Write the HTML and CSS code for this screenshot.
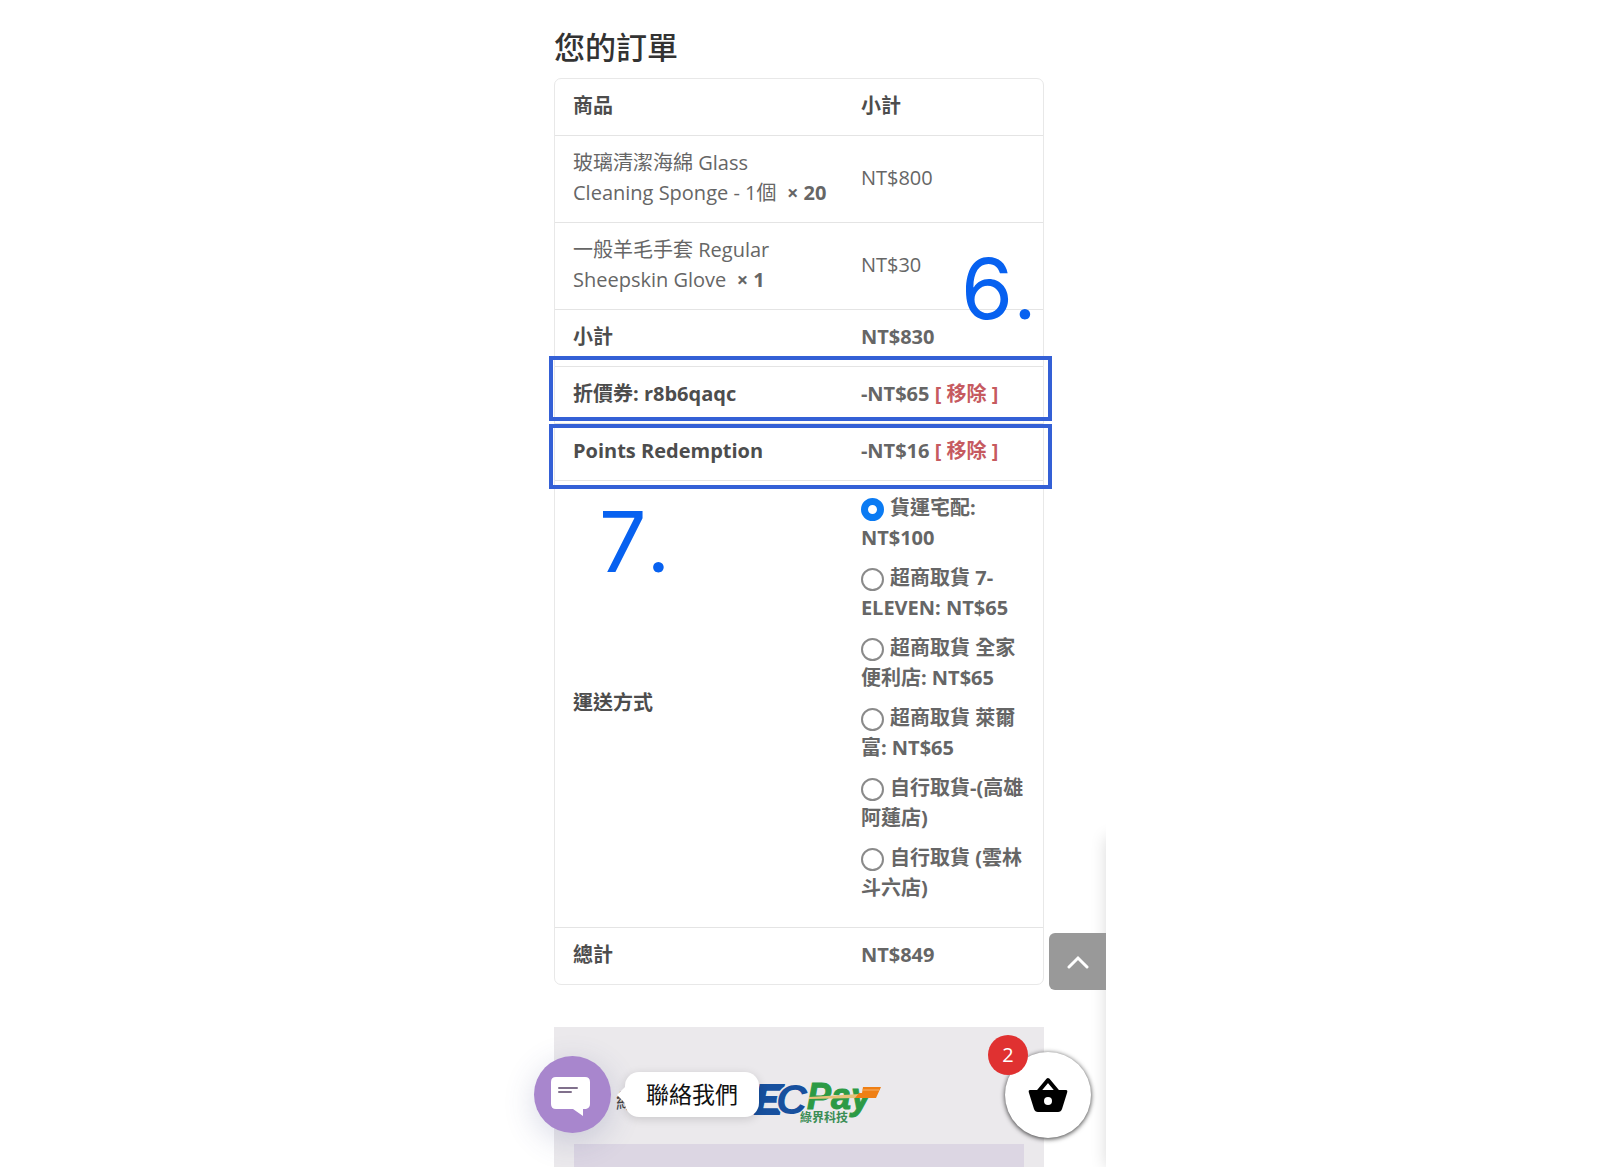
FILE: index.html
```html
<!DOCTYPE html>
<html lang="zh-Hant">
<head>
  <meta charset="UTF-8" />
  <meta name="viewport" content="width=device-width, initial-scale=1.0"/>
  <title>您的訂單</title>
  <link rel="stylesheet" href="styles.css">
</head>
<body>

  <div class="page">
    <h3 class="title">您的訂單</h3>

    <div class="order">
      <table class="order-table">
        <thead>
          <tr><th scope="col" class="name">商品</th><th scope="col">小計</th></tr>
        </thead>
        <tbody>
          <tr>
            <td>玻璃清潔海綿 Glass Cleaning Sponge - 1個 &nbsp;<strong>×&nbsp;20</strong></td>
            <td>NT$800</td>
          </tr>
          <tr>
            <td>一般羊毛手套 Regular Sheepskin Glove &nbsp;<strong>×&nbsp;1</strong></td>
            <td>NT$30</td>
          </tr>
        </tbody>
        <tfoot>
          <tr><th scope="row">小計</th><td>NT$830</td></tr>
          <tr><th scope="row">折價券: r8b6qaqc</th><td>-NT$65 <a href="#" class="remove">[ 移除 ]</a></td></tr>
          <tr><th scope="row">Points Redemption</th><td>-NT$16 <a href="#" class="remove">[ 移除 ]</a></td></tr>
          <tr>
            <th scope="row">運送方式</th>
            <td>
              <ul class="shipping">
                <li><input type="radio" name="shipping" id="ship1" checked> <label for="ship1">貨運宅配: NT$100</label></li>
                <li><input type="radio" name="shipping" id="ship2"> <label for="ship2">超商取貨 7-ELEVEN: NT$65</label></li>
                <li><input type="radio" name="shipping" id="ship3"> <label for="ship3">超商取貨 全家便利店: NT$65</label></li>
                <li><input type="radio" name="shipping" id="ship4"> <label for="ship4">超商取貨 萊爾富: NT$65</label></li>
                <li><input type="radio" name="shipping" id="ship5"> <label for="ship5">自行取貨-(高雄阿蓮店)</label></li>
                <li><input type="radio" name="shipping" id="ship6"> <label for="ship6">自行取貨 (雲林斗六店)</label></li>
              </ul>
            </td>
          </tr>
          <tr><th scope="row">總計</th><td>NT$849</td></tr>
        </tfoot>
      </table>

      <!-- step markers -->
      <div class="mark mark-coupon"></div>
      <div class="mark mark-points"></div>
      <div class="step step-6">6<span class="dot">.</span></div>
      <div class="step step-7">7<span class="dot">.</span></div>
    </div>

    <div class="payment">
      <div class="method">
        <span>綠界</span>
        <svg class="ecpay" width="150" height="46" viewBox="0 0 150 46" role="img" aria-label="ECPay">
          <g font-family="Liberation Sans, sans-serif" font-weight="bold" font-style="italic">
            <text x="16" y="35" font-size="43" fill="#17509e" stroke="#17509e" stroke-width="2">E</text>
            <text x="38" y="35" font-size="43" fill="#17509e" stroke="#ebe9ec" stroke-width="3" paint-order="stroke">C</text>
            <text x="69" y="30" font-size="36" fill="#2c9a45" stroke="#2c9a45" stroke-width="1">Pay</text>
          </g>
          <path d="M71 18L122 15L118 19L71 20Z" fill="#e6c27a"/>
          <path d="M125 8H143L138 19H117L121 14H124Z" fill="#ef7f14"/>
          <path d="M124 11H141" stroke="#f6b26b" stroke-width="1"/>
          <text x="62" y="43" font-family="Noto Sans CJK TC, sans-serif" font-size="12" font-weight="bold" fill="#3a8d55">綠界科技</text>
        </svg>
      </div>
      <div class="payment-box"></div>
    </div>

    <div class="edge"></div>

    <button type="button" class="to-top" aria-label="Top">
      <svg width="22" height="14" viewBox="0 0 22 14"><path d="M2 12L11 3L20 12" fill="none" stroke="#fff" stroke-width="3" stroke-linecap="round"/></svg>
    </button>

    <button type="button" class="chat" aria-label="Chat">
      <svg width="40" height="40" viewBox="0 0 40 40">
        <path d="M5 0H34Q39 0 39 5V27Q39 31 35 32L32 32V39L22 32H5Q0 32 0 27V5Q0 0 5 0Z" fill="#fff"/>
        <path d="M8 11H26M8 15H20" stroke="#80708c" stroke-width="2" stroke-linecap="round"/>
      </svg>
    </button>
    <div class="chat-label">聯絡我們</div>

    <button type="button" class="cart" aria-label="Cart">
      <svg width="40" height="36" viewBox="0 0 40 36">
        <path d="M10 15L20 3L30 15" fill="none" stroke="#000" stroke-width="4" stroke-linejoin="round"/>
        <path d="M2 13H38Q40 13 39 16L34 32Q33 35 30 35H10Q7 35 6 32L1 16Q0 13 2 13Z"/>
        <circle cx="20" cy="24" r="4" fill="#fff"/>
      </svg>
      <span class="badge">2</span>
    </button>
  </div>

</body>
</html>
```

FILE: styles.css
```css
* {
  box-sizing: border-box;
}
body {
  margin: 0;
  background: #fff;
  color: #666;
  font-family: "Open Sans", "Noto Sans CJK TC", sans-serif;
  font-size: 20px;
  line-height: 30px;
}
.page {
  position: relative;
  max-width: 612px;
  margin: 0 auto;
  padding: 27px 62px 0 60px;
  overflow: hidden;
}
.title {
  margin: 0 0 11px;
  color: #333;
  font-size: 31px;
  font-weight: 500;
  line-height: 40px;
}
.order {
  position: relative;
}
.order-table {
  width: 100%;
  border: 1px solid #e8e8e8;
  border-radius: 7px;
  border-spacing: 0;
  text-align: left;
  table-layout: fixed;
}
th, td {
  padding: 12px 14px 14px 18px;
  border-top: 1px solid #e4e4e4;
  vertical-align: middle;
  font-weight: 400;
}
thead th {
  border-top: none;
}
th {
  color: #4d4d4d;
  font-weight: 700;
}
.name {
  width: 59%;
}
tfoot td, strong {
  font-weight: 700;
}
.remove {
  color: #c65a5f;
  text-decoration: none;
}
.shipping {
  list-style: none;
  margin: 0;
  padding: 0;
}
.shipping li {
  margin-bottom: 10px;
}
.shipping input {
  appearance: none;
  width: 23px;
  height: 23px;
  margin: 0 1px 0 0;
  border: 2px solid #8a8a8a;
  border-radius: 50%;
  background: #fff;
  vertical-align: -6px;
}
.shipping input:checked {
  border: 7px solid #0b7bf3;
}

/* step markers over the table */
.mark {
  position: absolute;
  left: -5px;
  right: -8px;
  height: 65px;
  border: 4px solid #3460d6;
}
.mark-coupon {
  top: 278px;
}
.mark-points {
  top: 346px;
}
.step {
  position: absolute;
  color: #0761f0;
  font-family: Inter, sans-serif;
  font-size: 84px;
  line-height: 84px;
}
.step .dot {
  margin-left: 2px;
  font-family: Lato, sans-serif;
}
.step-6 {
  top: 167px;
  left: 407px;
}
.step-7 {
  top: 420px;
  left: 45px;
}

.payment {
  margin-top: 42px;
  padding: 42px 20px 0;
  background: #ebe9ec;
}
.method {
  display: flex;
  align-items: center;
  gap: 82px;
  height: 65px;
  margin-bottom: 10px;
  padding-left: 42px;
  color: #444;
}
.payment-box {
  height: 23px;
  background: #dcd6e3;
}
.edge {
  position: absolute;
  right: -20px;
  bottom: 0;
  width: 20px;
  height: 330px;
  box-shadow: 0 0 16px rgba(0,0,0,0.15);
}

/* floating buttons */
button {
  display: flex;
  align-items: center;
  justify-content: center;
  padding: 0;
  border: none;
  cursor: pointer;
}
.to-top {
  position: absolute;
  right: 0;
  bottom: 177px;
  width: 57px;
  height: 57px;
  border-radius: 6px 0 0 6px;
  background: #999;
}
.chat {
  position: absolute;
  left: 40px;
  bottom: 34px;
  width: 77px;
  height: 77px;
  padding: 4px 3px 0 0;
  border-radius: 50%;
  background: #a886cd;
  box-shadow: 0 8px 32px rgba(60,70,130,0.2);
}
.chat-label {
  position: absolute;
  left: 131px;
  bottom: 50px;
  padding: 7px 21px 8px;
  border-radius: 14px;
  background: #fff;
  color: #111;
  font-size: 23px;
  box-shadow: 0 2px 10px rgba(0,0,0,0.15);
}
.chat-label::before {
  content: "";
  position: absolute;
  left: -8px;
  top: 15px;
  border: 8px solid transparent;
  border-left: none;
  border-right-color: #fff;
}
.cart {
  position: absolute;
  right: 15px;
  bottom: 29px;
  width: 86px;
  height: 86px;
  border-radius: 50%;
  background: #fff;
  box-shadow: 0 1px 5px rgba(0,0,0,0.8);
}
.badge {
  position: absolute;
  left: -17px;
  top: -17px;
  width: 40px;
  height: 40px;
  border-radius: 50%;
  background: #e03131;
  color: #fff;
  font-family: "Open Sans", sans-serif;
  font-size: 20px;
  line-height: 40px;
  text-align: center;
}
```
